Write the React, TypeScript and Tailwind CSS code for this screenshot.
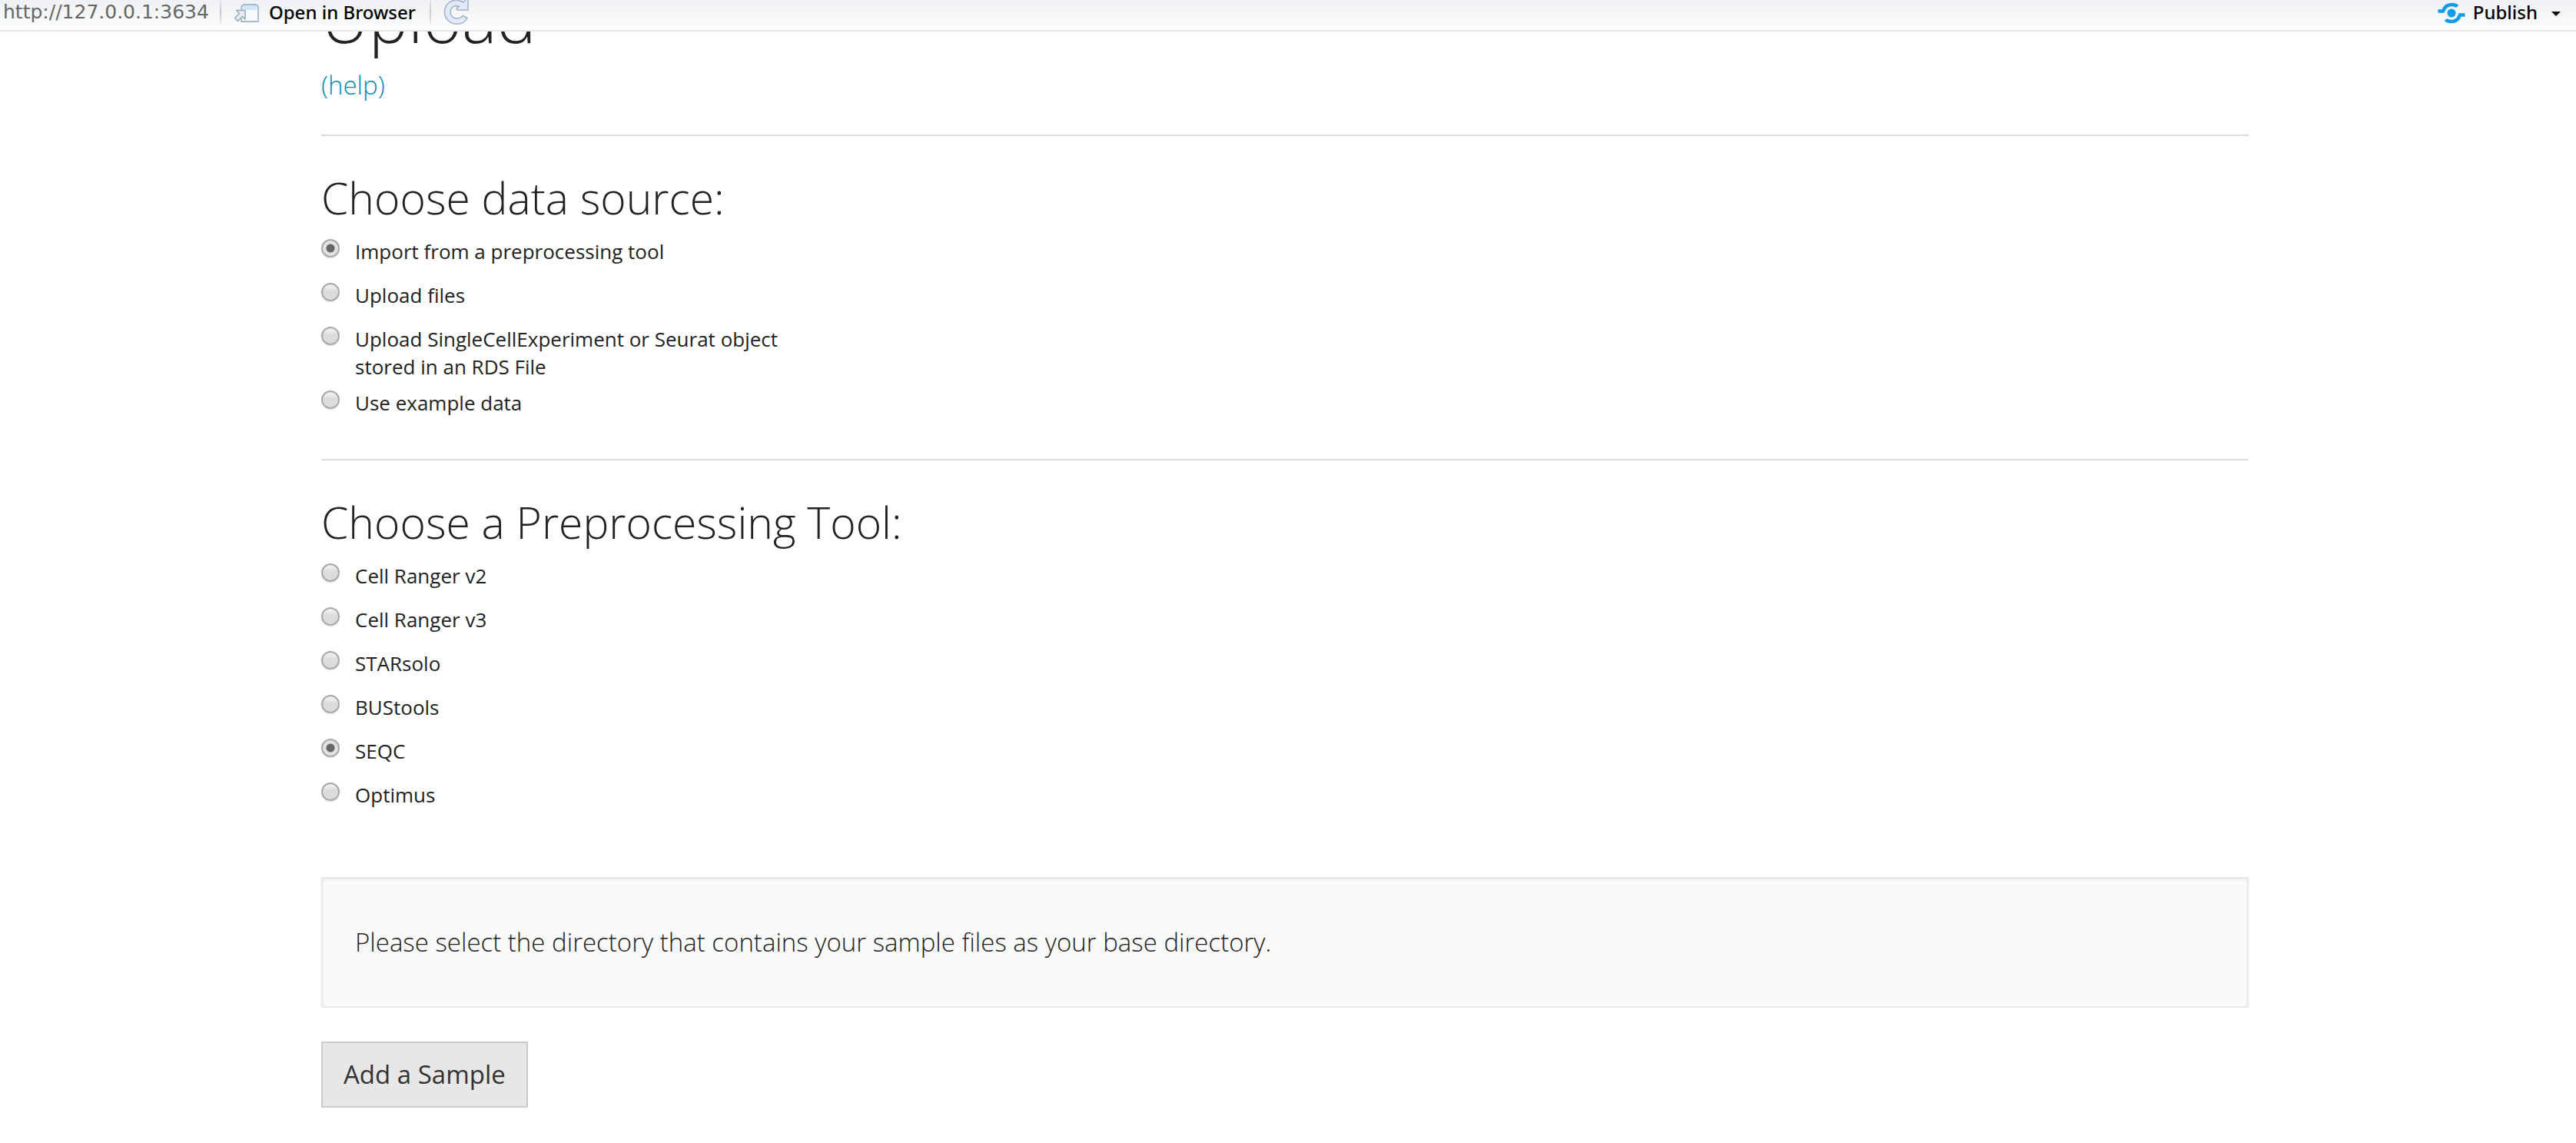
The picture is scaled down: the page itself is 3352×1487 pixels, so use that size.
import { useState } from 'react';

const sources = [
  'Import from a preprocessing tool',
  'Upload files',
  'Upload SingleCellExperiment or Seurat object stored in an RDS File',
  'Use example data',
];
const tools = ['Cell Ranger v2', 'Cell Ranger v3', 'STARsolo', 'BUStools', 'SEQC', 'Optimus'];

function Separator() {
  return <span className="h-8 w-0.5 shrink-0 bg-linear-to-b from-[#e4e6e9] via-[#c4c6c9] to-[#eceef0]" />;
}

function OpenIcon() {
  return (
    <svg width="34" height="26" viewBox="0 0 34 26" fill="none" aria-hidden="true">
      <path d="M10 24V6a4 4 0 0 1 4-4h14a4 4 0 0 1 4 4v18z" fill="#f8fbfd" />
      <path d="M10 9V6a4 4 0 0 1 4-4h14a4 4 0 0 1 4 4v3z" fill="#cfe6fb" />
      <path d="M10 24V6a4 4 0 0 1 4-4h14a4 4 0 0 1 4 4v18z" stroke="#a9bac8" strokeWidth="1.8" />
      <path d="M3.500 9.500H15V21L11.500 17.500L5.500 23.500L1.500 19.500L7.500 13.500Z" fill="#e9eaf0" stroke="#9badba" strokeWidth="1.6" strokeLinejoin="round" />
    </svg>
  );
}

function RefreshIcon() {
  return (
    <svg width="34" height="34" viewBox="0 0 34 34" fill="none" aria-hidden="true">
      <path
        d="M32 -1V13H17.500V10.500L20.500 8.500C14.500 6 9 9.500 9 15.500C9 21 13 24 17.500 24C20.500 24 23 23 25 20.500L31 23.500C28.500 28.500 23.500 31.200 17.500 31.200C8.500 31.200 1.500 24.500 1.500 15.500C1.500 3.500 14 -4 26 3L30 -1Z"
        fill="#e0eafa"
        stroke="#a9b3c4"
        strokeWidth="1.6"
        strokeLinejoin="round"
      />
    </svg>
  );
}

function PublishIcon() {
  return (
    <svg width="36" height="30" viewBox="0 0 36 30" fill="none" aria-hidden="true">
      <circle cx="18" cy="15" r="5.500" fill="#0d9bea" />
      <path d="M0.500 12.500H7C9 6.500 12.500 4 18 4C21.500 4 24 4.800 25.500 6.500" stroke="#0d9bea" strokeWidth="4.500" />
      <path d="M35.500 17.500H29C27 23.500 23.500 26 18 26C14.500 26 12 25.200 10.500 23.500" stroke="#0d9bea" strokeWidth="4.500" />
    </svg>
  );
}

function RadioList({ name, options, initial }: { name: string; options: string[]; initial: string }) {
  const [value, setValue] = useState(initial);
  return (
    <div role="radiogroup" aria-labelledby={name + '-title'} className="mt-5 flex w-[600px] flex-col gap-[11px]">
      {options.map((o) => (
        <label key={o} className="flex min-h-[46px] items-start gap-5 text-[26px] leading-9">
          <input
            type="radio"
            name={name}
            checked={value === o}
            onChange={() => setValue(o)}
            className="mt-0.5 size-6 shrink-0 appearance-none rounded-full border-2 border-[#a9a9a9] bg-linear-to-b from-[#ececec] from-20% to-[#dcdcdc] to-40% shadow-[0_2px_1px_#00000010] checked:bg-[radial-gradient(circle,#666_5px,#e2e2e2_6px)]"
          />
          <span>{o}</span>
        </label>
      ))}
    </div>
  );
}

export default function App() {
  return (
    <div className="bg-white font-['Open_Sans',sans-serif] text-[#222]">
      <header className="flex h-[41px] items-start border-b-2 border-[#e6e6ee] bg-linear-to-b from-[#eff1f4] to-[#fcfdfd] pl-1 font-['Noto_Sans',sans-serif] text-2xl leading-8 font-medium text-black">
        <span className="mr-3.5 font-['DejaVu_Sans',sans-serif] text-[25px] font-normal text-[#666]">http://127.0.0.1:3634</span>
        <Separator />
        <button type="button" className="mr-[18px] ml-4 flex items-start gap-3">
          <span className="mt-1"><OpenIcon /></span>
          Open in Browser
        </button>
        <Separator />
        <button type="button" aria-label="Refresh" className="ml-4"><RefreshIcon /></button>
        <button type="button" className="mr-5 ml-auto flex items-start gap-2.5">
          <span className="mt-0.5"><PublishIcon /></span>
          Publish
          <svg className="mt-[15px] ml-2" width="12" height="6" viewBox="0 0 12 6" aria-hidden="true"><path d="M0 0h12L6 6z" fill="#111" /></svg>
        </button>
      </header>
      <div className="overflow-hidden pr-2">
        <main className="mx-auto w-3/4 pb-11">
          <h1 className="-mt-[66px] text-[86px] leading-[96px] font-light">Upload</h1>
          <p className="mt-4 text-[33px] leading-12 font-light">
            <a href="#help" className="text-[#008cba]">(help)</a>
          </p>
          <hr className="mt-10 border-t-2 border-[#ddd]" />
          <h2 id="source-title" className="mt-12 text-[57px] leading-16 font-light">Choose data source:</h2>
          <RadioList name="source" options={sources} initial={sources[0]} />
          <hr className="mt-[45px] border-t-2 border-[#ddd]" />
          <h2 id="tool-title" className="mt-12 text-[57px] leading-16 font-light">Choose a Preprocessing Tool:</h2>
          <RadioList name="tool" options={tools} initial="SEQC" />
          <div className="mt-[79px] border-2 border-[#e8e8e8] bg-[#fafafa] px-[42px] py-[58px] text-[33px] leading-[50px] font-light shadow-[inset_0_2px_4px_#0000000d]">
            Please select the directory that contains your sample files as your base directory.
          </div>
          <button type="button" className="mt-11 border-2 border-[#ccc] bg-[#e7e7e7] px-[27px] py-4 text-[33px] leading-[50px] text-[#333]">
            Add a Sample
          </button>
        </main>
      </div>
    </div>
  );
}
